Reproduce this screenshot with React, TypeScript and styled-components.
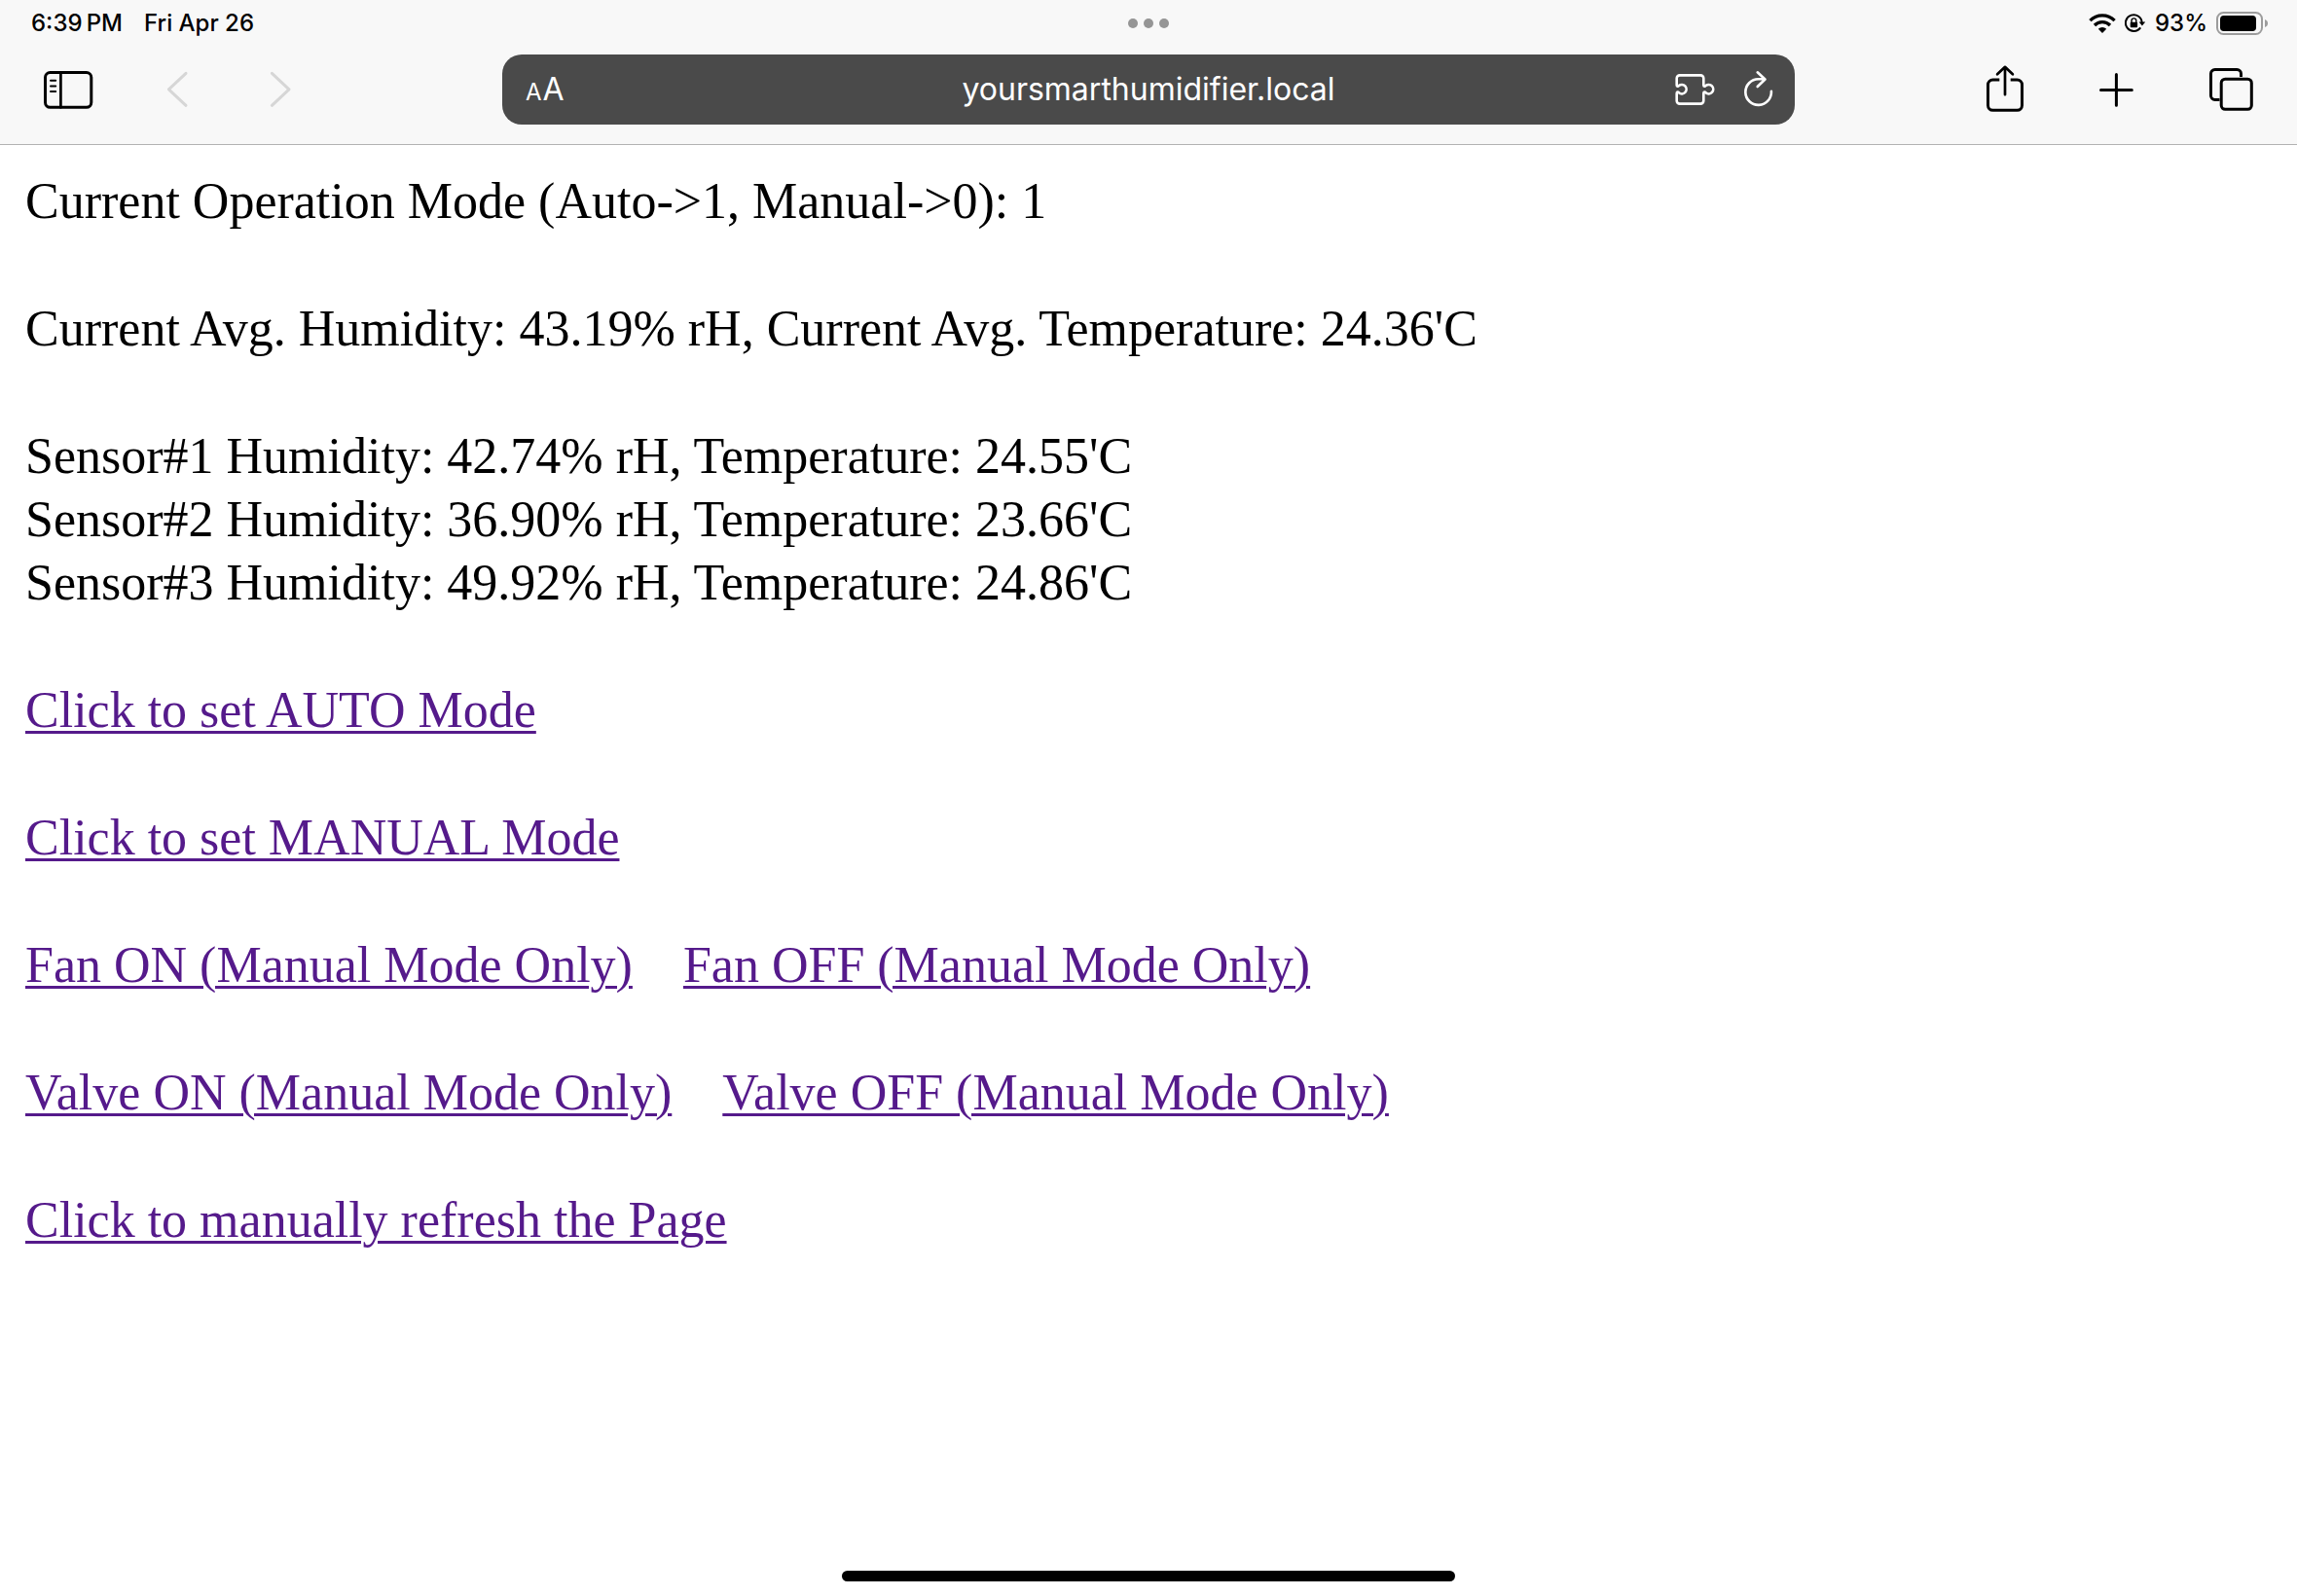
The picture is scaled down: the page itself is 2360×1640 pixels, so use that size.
import React from "react";
import styled, { createGlobalStyle } from "styled-components";

const GlobalStyle = createGlobalStyle`
  *, *::before, *::after {
    box-sizing: border-box;
  }
  body {
    margin: 0;
    background: #fff;
    color: #000;
  }
`;

const uiFont = `Inter, "Liberation Sans", sans-serif`;

const Screen = styled.div`
  display: flex;
  flex-direction: column;
  min-height: 100vh;
`;

const Chrome = styled.header`
  background: #f8f8f8;
  border-bottom: 1px solid #b2b2b2;
  font-family: ${uiFont};
`;

const StatusBar = styled.div`
  display: grid;
  grid-template-columns: 1fr auto 1fr;
  align-items: center;
  height: 48px;
  font-size: 24px;
  font-weight: 500;
  line-height: 28px;
`;

const StatusGroup = styled.div<{ $end?: boolean }>`
  display: flex;
  align-items: center;
  justify-content: ${(p) => (p.$end ? "flex-end" : "flex-start")};
  gap: ${(p) => (p.$end ? "9px" : "22px")};
  padding: ${(p) => (p.$end ? "0 29px 0 0" : "0 0 0 32px")};

  svg {
    flex: none;
  }
`;

const MultitaskButton = styled.button`
  display: flex;
  gap: 6px;
  padding: 8px;
  border: 0;
  background: none;
`;

const Dot = styled.span`
  width: 10px;
  height: 10px;
  border-radius: 50%;
  background: #959595;
`;

const Toolbar = styled.div`
  display: grid;
  grid-template-columns: 1fr minmax(0, 1328px) 1fr;
  align-items: center;
  padding: 8px 0 20px;
`;

const ToolGroup = styled.nav<{ $end?: boolean }>`
  display: flex;
  align-items: center;
  justify-content: ${(p) => (p.$end ? "flex-end" : "flex-start")};
  gap: ${(p) => (p.$end ? "64px" : "54px")};
  padding: ${(p) => (p.$end ? "0 42px 0 0" : "0 0 0 38px")};
`;

const ToolButton = styled.button<{ $wide?: boolean }>`
  display: flex;
  align-items: center;
  justify-content: center;
  flex: none;
  width: ${(p) => (p.$wide ? "64px" : "52px")};
  height: 56px;
  padding: 0;
  border: 0;
  background: none;
  color: #000;

  &:disabled {
    color: #d6d6d6;
  }
`;

const AddressBar = styled.div`
  display: grid;
  grid-template-columns: 124px 1fr 124px;
  align-items: center;
  height: 72px;
  border-radius: 20px;
  background: #4a4a4a;
  color: #fff;
`;

const TextSizeButton = styled.button`
  display: flex;
  align-items: baseline;
  gap: 1px;
  padding: 2px 0 0 24px;
  border: 0;
  background: none;
  color: inherit;
  font: 400 32px/40px ${uiFont};
`;

const SmallLetter = styled.span`
  font-size: 24px;
`;

const AddressInput = styled.input`
  width: 100%;
  min-width: 0;
  padding: 0;
  border: 0;
  outline: 0;
  background: none;
  color: inherit;
  font: 400 32px/40px ${uiFont};
  text-align: center;
`;

const AddressActions = styled.div`
  display: flex;
  gap: 24px;
`;

const AddressButton = styled.button`
  display: flex;
  padding: 0;
  border: 0;
  background: none;
  color: inherit;
`;

const Content = styled.main`
  display: flex;
  flex: 1;
  flex-direction: column;
  gap: 66px;
  padding: 25px 26px;
  font-family: "Liberation Serif", "Times New Roman", serif;
  font-size: 52px;
  line-height: 65px;
`;

const Paragraph = styled.p`
  margin: 0;
`;

const SensorList = styled.ul`
  margin: 0;
  padding: 0;
  list-style: none;
`;

const LinkRow = styled.div`
  display: flex;
  flex-wrap: wrap;
  gap: 52px;
`;

const Link = styled.a`
  color: #551a8b;
  text-decoration: underline;
  text-decoration-thickness: 3px;
  text-underline-offset: 4px;
`;

const HomeArea = styled.footer`
  display: flex;
  justify-content: center;
  padding-bottom: 15px;
`;

const HomeIndicator = styled.div`
  width: 630px;
  height: 11px;
  border-radius: 6px;
  background: #000;
`;

const stroke = {
  fill: "none",
  stroke: "currentColor",
  strokeWidth: 3,
  strokeLinecap: "round",
  strokeLinejoin: "round",
  "aria-hidden": true,
} as const;

const SidebarIcon = () => (
  <svg width="52" height="40" viewBox="0 0 52 40" {...stroke}>
    <rect x="2.5" y="2.5" width="47.3" height="35.8" rx="5" />
    <path d="M18.4 2.5v35.8" strokeWidth="2.7" />
    <path d="M8 10.7h5.2M8 16.4h5.2M8 22.1h5.2" strokeWidth="2" />
  </svg>
);

const BackIcon = () => (
  <svg width="52" height="40" viewBox="0 0 52 40" {...stroke}>
    <path d="M35 3.3L17.4 19.8L35 36.3" />
  </svg>
);

const ForwardIcon = () => (
  <svg width="52" height="40" viewBox="0 0 52 40" {...stroke}>
    <path d="M17.4 3.3L35 19.8L17.4 36.3" />
  </svg>
);

const ShareIcon = () => (
  <svg width="52" height="56" viewBox="0 0 52 56" {...stroke}>
    <path
      d="M20.3 18H13.5a5 5 0 0 0-5 5V44.3a5 5 0 0 0 5 5H38.5a5 5 0 0 0 5-5V23a5 5 0 0 0-5-5H31.7"
      strokeLinecap="butt"
    />
    <path d="M26 5v28.2M18.1 12.3L26 4.8L33.9 12.3" strokeWidth="2.7" />
  </svg>
);

const PlusIcon = () => (
  <svg width="52" height="40" viewBox="0 0 52 40" {...stroke}>
    <path d="M8.5 20.4h31.8M24.4 4.6v31.6" />
  </svg>
);

const TabsIcon = () => (
  <svg width="52" height="52" viewBox="0 0 52 52" {...stroke}>
    <path
      d="M36.5 13V9.7a4.2 4.2 0 0 0-4.2-4.2H9.7a4.2 4.2 0 0 0-4.2 4.2V32.3a4.2 4.2 0 0 0 4.2 4.2H14.5"
      strokeLinecap="butt"
    />
    <rect x="16.2" y="15.2" width="31.1" height="31.1" rx="4" />
  </svg>
);

const ExtensionIcon = () => (
  <svg width="44" height="40" viewBox="0 0 44 40" {...stroke} strokeWidth="2.6">
    <path d="M2.7 15.5V8.4a3 3 0 0 1 3-3H27.3a3 3 0 0 1 3 3V15.5c0 1.6 1.5 1.6 2.2.6A4.7 4.7 0 1 1 32.5 23.3c-.7-1-2.2-1-2.2.6V31.6a3 3 0 0 1-3 3H5.7a3 3 0 0 1-3-3V23.9c0-1.6 1.5-1.6 2.2-.6A4.7 4.7 0 1 0 4.9 16.1c-.7 1-2.2 1-2.2-.6Z" />
  </svg>
);

const ReloadIcon = () => (
  <svg width="36" height="40" viewBox="0 0 36 40" {...stroke} strokeWidth="2.6">
    <path d="M31.9 21.7A13.3 13.3 0 1 1 18.7 9.3H25M17.7 2.3L25.5 9.5L17.7 17" />
  </svg>
);

const WifiIcon = () => (
  <svg width="28" height="20" viewBox="0 0 28 20" aria-hidden>
    <g fill="none" stroke="#000" strokeWidth="3.3">
      <path d="M1.4 7.2A17.8 17.8 0 0 1 26.6 7.2" />
      <path d="M6 12A11.3 11.3 0 0 1 22 12" />
    </g>
    <path d="M14 20L9.8 15.7a6 6 0 0 1 8.4 0Z" />
  </svg>
);

const RotationLockIcon = () => (
  <svg width="22" height="20" viewBox="0 0 22 20" aria-hidden>
    <path
      d="M17.7 9.5A8.4 8.4 0 1 0 16.2 14.4"
      fill="none"
      stroke="#000"
      strokeWidth="2"
    />
    <path d="M14.6 8.4H21.2L17.9 12.5Z" />
    <rect x="5.7" y="8.7" width="7.4" height="5.6" rx="1" />
    <path d="M7 9V7.3a2.4 2.4 0 0 1 4.8 0V9" fill="none" stroke="#000" strokeWidth="1.4" />
  </svg>
);

const BatteryIcon = () => (
  <svg width="54" height="24" viewBox="0 0 54 24" aria-hidden>
    <rect x="1" y="1" width="46" height="22" rx="6.5" fill="none" stroke="#9c9c9c" strokeWidth="2" />
    <rect x="4" y="4" width="37" height="16" rx="3.8" />
    <path d="M50 8C54 9.3 54 14.7 50 16Z" fill="#9c9c9c" />
  </svg>
);

const sensors = [
  { id: 1, humidity: "42.74", temperature: "24.55" },
  { id: 2, humidity: "36.90", temperature: "23.66" },
  { id: 3, humidity: "49.92", temperature: "24.86" },
];

const linkRows = [
  ["Click to set AUTO Mode"],
  ["Click to set MANUAL Mode"],
  ["Fan ON (Manual Mode Only)", "Fan OFF (Manual Mode Only)"],
  ["Valve ON (Manual Mode Only)", "Valve OFF (Manual Mode Only)"],
  ["Click to manually refresh the Page"],
];

export default function App() {
  return (
    <Screen>
      <GlobalStyle />
      <Chrome>
        <StatusBar>
          <StatusGroup>
            <span>{"6:39\u2009PM"}</span>
            <span>Fri Apr 26</span>
          </StatusGroup>
          <MultitaskButton aria-label="Multitasking">
            <Dot />
            <Dot />
            <Dot />
          </MultitaskButton>
          <StatusGroup $end>
            <WifiIcon />
            <RotationLockIcon />
            <span>93%</span>
            <BatteryIcon />
          </StatusGroup>
        </StatusBar>
        <Toolbar>
          <ToolGroup aria-label="Navigation">
            <ToolButton $wide aria-label="Show sidebar">
              <SidebarIcon />
            </ToolButton>
            <ToolButton disabled aria-label="Back">
              <BackIcon />
            </ToolButton>
            <ToolButton disabled aria-label="Forward">
              <ForwardIcon />
            </ToolButton>
          </ToolGroup>
          <AddressBar>
            <TextSizeButton aria-label="Page settings">
              <SmallLetter>A</SmallLetter>
              <span>A</span>
            </TextSizeButton>
            <AddressInput
              type="text"
              aria-label="Address"
              defaultValue="yoursmarthumidifier.local"
              spellCheck={false}
            />
            <AddressActions>
              <AddressButton aria-label="Extensions">
                <ExtensionIcon />
              </AddressButton>
              <AddressButton aria-label="Reload">
                <ReloadIcon />
              </AddressButton>
            </AddressActions>
          </AddressBar>
          <ToolGroup $end aria-label="Page actions">
            <ToolButton aria-label="Share">
              <ShareIcon />
            </ToolButton>
            <ToolButton aria-label="New tab">
              <PlusIcon />
            </ToolButton>
            <ToolButton aria-label="Show tabs">
              <TabsIcon />
            </ToolButton>
          </ToolGroup>
        </Toolbar>
      </Chrome>
      <Content>
        <Paragraph>{"Current Operation Mode (Auto->1, Manual->0): 1"}</Paragraph>
        <Paragraph>
          Current Avg. Humidity: 43.19% rH, Current Avg. Temperature: 24.36'C
        </Paragraph>
        <SensorList>
          {sensors.map((s) => (
            <li key={s.id}>
              {`Sensor#${s.id} Humidity: ${s.humidity}% rH, Temperature: ${s.temperature}'C`}
            </li>
          ))}
        </SensorList>
        {linkRows.map((row) => (
          <LinkRow key={row[0]}>
            {row.map((label) => (
              <Link key={label} href="#">
                {label}
              </Link>
            ))}
          </LinkRow>
        ))}
      </Content>
      <HomeArea>
        <HomeIndicator />
      </HomeArea>
    </Screen>
  );
}
